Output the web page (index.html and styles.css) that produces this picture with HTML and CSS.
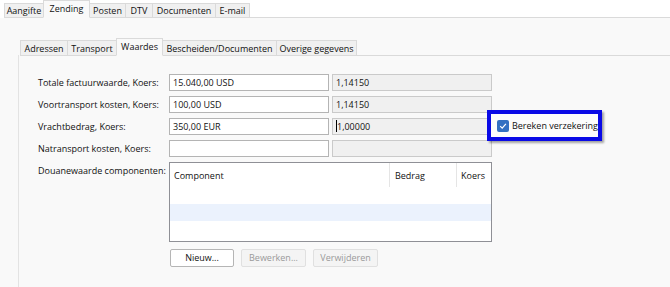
FILE: index.html
```html
<!DOCTYPE html>
<html>
<head>
<meta charset="utf-8">
<link rel="stylesheet" href="styles.css">
</head>
<body>
<div class="tabbar top">
  <div class="tab t1">Aangifte</div>
  <div class="tab sel t2">Zending</div>
  <div class="tab t3">Posten</div>
  <div class="tab t4">DTV</div>
  <div class="tab t5">Documenten</div>
  <div class="tab t6">E-mail</div>
  <div class="tabfill"></div>
</div>
<div class="outer">
  <div class="tabbar inner">
    <div class="tab i1">Adressen</div>
    <div class="tab i2">Transport</div>
    <div class="tab sel i3">Waardes</div>
    <div class="tab i4">Bescheiden/Documenten</div>
    <div class="tab i5">Overige gegevens</div>
    <div class="tabfill"></div>
  </div>
  <div class="panel">
    <div class="row">
      <div class="label">Totale factuurwaarde, Koers:</div>
      <div class="input">15.040,00 USD</div>
      <div class="input ro">1,14150</div>
    </div>
    <div class="row">
      <div class="label">Voortransport kosten, Koers:</div>
      <div class="input">100,00 USD</div>
      <div class="input ro">1,14150</div>
    </div>
    <div class="row">
      <div class="label">Vrachtbedrag, Koers:</div>
      <div class="input">350,00 EUR</div>
      <div class="input ro"><span class="caret"></span>1,00000</div>
      <div class="highlight">
        <span class="check"><svg width="12" height="12" viewBox="0 0 12 12"><path d="M3.2 6.2 L5.2 8.2 L8.9 3.9" fill="none" stroke="#fff" stroke-width="1.2"/></svg></span>
        <span>Bereken verzekering</span>
      </div>
    </div>
    <div class="row">
      <div class="label">Natransport kosten, Koers:</div>
      <div class="input"></div>
      <div class="input ro"></div>
    </div>
    <div class="row tablerow">
      <div class="label">Douanewaarde componenten:</div>
      <div class="grid">
        <div class="ghead">
          <div class="c1">Component</div>
          <div class="c2">Bedrag</div>
          <div class="c3">Koers</div>
        </div>
        <div class="grow"></div>
        <div class="grow alt"></div>
        <div class="grow"></div>
      </div>
    </div>
    <div class="buttons">
      <div class="btn">Nieuw...</div>
      <div class="btn dis">Bewerken...</div>
      <div class="btn dis">Verwijderen</div>
    </div>
  </div>
</div>
</body>
</html>
```
FILE: styles.css
```css
* { box-sizing: border-box; }
html, body { margin: 0; padding: 0; }
body {
  width: 670px;
  height: 287px;
  overflow: hidden;
  background: #f9f9f9;
  font-family: "Open Sans", "Noto Sans", sans-serif;
  font-size: 9px;
  color: #111;
}
.tabbar { display: flex; align-items: flex-end; }
.tabbar.top { height: 18px; padding-left: 4px; background: #fff; }
.tab {
  height: 15px;
  line-height: 14px;
  text-align: center;
  background: #f0f0f0;
  border: 1px solid #dadada;
  margin-right: -1px;
  white-space: nowrap;
}
.tab.sel {
  height: 18px;
  line-height: 15px;
  background: #f9f9f9;
  border-bottom-color: #f9f9f9;
  position: relative;
  z-index: 1;
}
.t1 { width: 40px; }
.t2 { width: 47px; }
.t3 { width: 37px; }
.t4 { width: 28px; }
.t5 { width: 64px; }
.t6 { width: 35px; }
.tabfill { flex: 1; border-bottom: 1px solid #dadada; height: 1px; }
.outer { padding: 20px 0 0 18px; }
.tabbar.inner { padding-left: 2px; height: 18px; }
.tabbar.inner .tab { height: 16px; line-height: 15px; }
.tabbar.inner .tab.sel { height: 18px; line-height: 15px; }
.i1 { width: 48px; }
.i2 { width: 50px; }
.i3 { width: 47px; }
.i4 { width: 115px; }
.i5 { width: 81px; }
.panel {
  border-left: 1px solid #e3e3e3;
  padding: 19px 0 0 19px;
  height: 240px;
  margin-top: -1px;
}
.row { display: flex; align-items: center; height: 17px; margin-bottom: 5px; position: relative; }
.label { width: 131px; white-space: nowrap; }
.input {
  width: 160px;
  height: 17px;
  border: 1px solid #b4b4b4;
  background: #fff;
  padding: 0 3px;
  line-height: 15px;
  margin-right: 3px;
  white-space: nowrap;
  position: relative;
}
.input.ro { background: #f0f0f0; border-color: #cacaca; }
.caret { display: inline-block; width: 1px; height: 12px; background: #000; vertical-align: -2px; }
.highlight {
  position: absolute;
  left: 449px;
  top: -8px;
  width: 115px;
  height: 31px;
  border: 4px solid #0a0ae6;
  background: #fcfcfc;
  box-shadow: 2px 2px 2px rgba(0,0,0,0.35);
  display: flex;
  align-items: center;
  padding-left: 6px;
  gap: 3px;
  white-space: nowrap;
  z-index: 2;
}
.check {
  width: 12px; height: 12px;
  background: #3270c2;
  border-radius: 2px;
  display: flex;
}
.tablerow { height: 80px; align-items: flex-start; margin-top: 1px; }
.tablerow .label { margin-top: 2px; }
.grid {
  width: 323px;
  height: 80px;
  border: 1px solid #8f9096;
  background: #fff;
}
.ghead { display: flex; height: 24px; }
.ghead > div { line-height: 26px; padding-left: 4px; border-right: 1px solid #e5e5e5; }
.ghead .c1 { width: 220px; }
.ghead .c2 { width: 67px; padding-left: 5px; }
.ghead .c3 { flex: 1; border-right: none; }
.grow { height: 17px; }
.grow.alt { background: #ebf2fd; }
.buttons { display: flex; gap: 7px; margin-left: 132px; margin-top: 7px; }
.btn {
  height: 18px;
  line-height: 16px;
  border: 1px solid #b5b5b5;
  background: #fff;
  border-radius: 2px;
  text-align: center;
}
.btn:nth-child(1) { width: 64px; }
.btn:nth-child(2) { width: 65px; }
.btn:nth-child(3) { width: 65px; }
.btn.dis { background: #f4f4f4; border-color: #e0e0e0; color: #9a9a9a; }
```
